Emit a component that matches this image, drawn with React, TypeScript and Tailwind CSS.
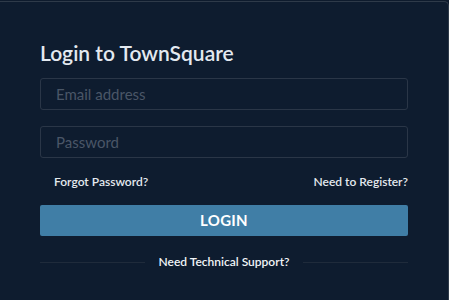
import React from "react";

export default function App() {
  return (
    <div
      className="w-[449px] h-[300px] bg-[#0e1b2d] overflow-hidden"
      style={{ fontFamily: "Lato, 'Open Sans', Arial, sans-serif" }}
    >
      <div className="mt-[1px] h-[320px] border-t border-r border-[#2e3a49] rounded-tr-[5px] bg-[#0e1c2f] px-10 pt-[37px]">
        <h1 className="text-[21px] leading-[28px] font-semibold text-[#e3e9f0]">
          Login to TownSquare
        </h1>
        <div className="mt-[11px] flex flex-col gap-4">
          <input
            className="h-[32px] w-full rounded-[3px] border border-[#2a3647] bg-transparent px-[15px] text-[15px] text-[#cfd6de] placeholder:text-[#4a5667] outline-none"
            placeholder="Email address"
          />
          <input
            type="password"
            className="h-[32px] w-full rounded-[3px] border border-[#2a3647] bg-transparent px-[15px] text-[15px] text-[#cfd6de] placeholder:text-[#4a5667] outline-none"
            placeholder="Password"
          />
        </div>
        <div className="mt-[16px] flex justify-between pl-[14px] text-[12px] leading-[16px] font-semibold text-[#e4e9ee]">
          <span>Forgot Password?</span>
          <span>Need to Register?</span>
        </div>
        <button className="mt-[15px] h-[31px] w-full rounded-[2px] bg-[#407ea6] text-[15px] font-bold text-white tracking-[0.3px]">
          LOGIN
        </button>
        <div className="mt-[18px] flex items-center gap-[14px]">
          <div className="h-px flex-1 bg-[#1f2b3b]" />
          <span className="text-[12px] leading-[16px] font-semibold text-[#f1f4f7]">
            Need Technical Support?
          </span>
          <div className="h-px flex-1 bg-[#1f2b3b]" />
        </div>
      </div>
    </div>
  );
}
